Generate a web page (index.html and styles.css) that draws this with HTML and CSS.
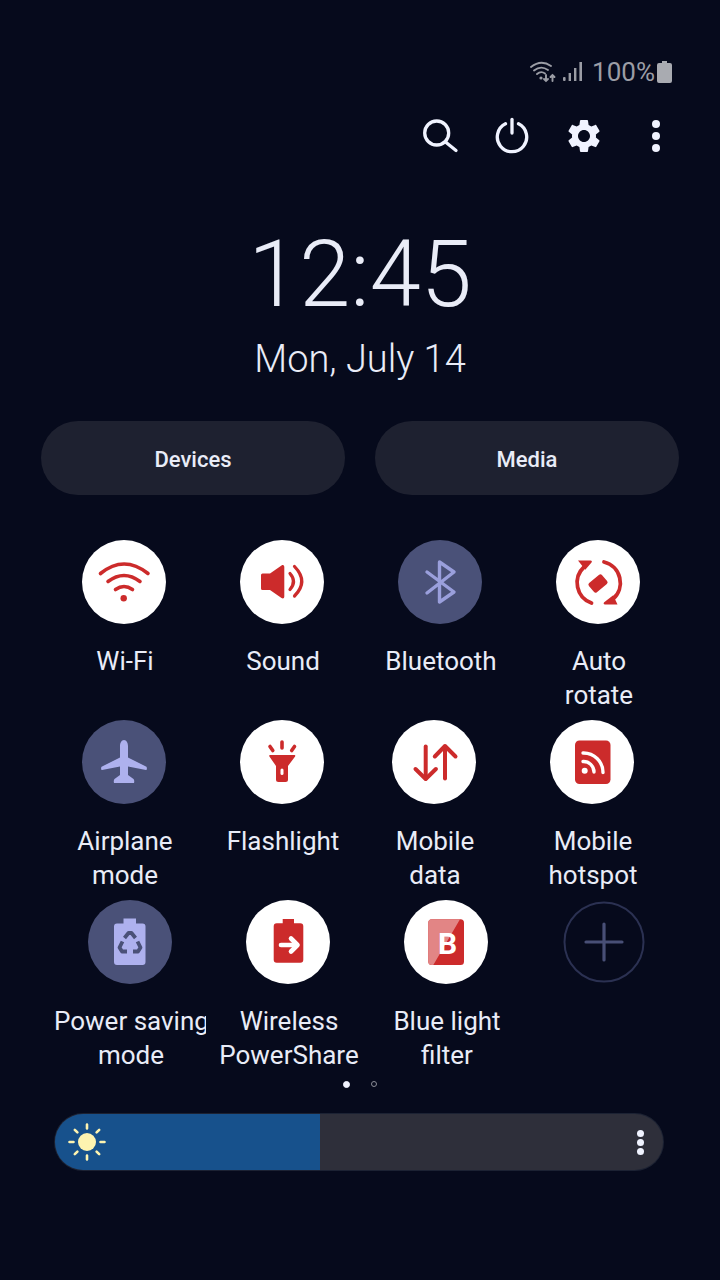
FILE: index.html
```html
<!DOCTYPE html>
<html lang="en">
  <head>
    <meta charset="UTF-8" />
    <title>Quick panel</title>
    <meta name="viewport" content="width=device-width, initial-scale=1.0" />
    <link rel="stylesheet" href="styles.css">
  </head>
  <body>
    <div class="status-bar">
      <svg width="26" height="22" viewBox="0 0 26 22" class="st-icon">
        <g fill="none" stroke="#9b9da5" stroke-width="1.9" stroke-linecap="round">
          <path d="M1 6 Q11 -2 21 5" />
          <path d="M4 9.5 Q11 4 18 9" />
          <path d="M7 13 Q11 9.5 15 12.5" />
          <path d="M16 14v6M14 18l2 2 2-2" />
          <path d="M22.5 20v-6M20.5 16l2-2 2 2" />
        </g>
        <circle cx="11" cy="17" r="1.6" fill="#9b9da5" />
      </svg>
      <svg width="20" height="20" viewBox="0 0 20 20" class="st-signal">
        <g fill="#9b9da5">
          <rect x="0" y="15" width="2.6" height="4" rx="1" />
          <rect x="5.6" y="11" width="2.4" height="8" />
          <rect x="11" y="6" width="2.4" height="13" />
          <rect x="16.4" y="0" width="2.6" height="19" />
        </g>
      </svg>
      <span class="st-text">100%</span>
      <svg width="15" height="22" viewBox="0 0 15 22">
        <path d="M5 0h5v2h3a2 2 0 0 1 2 2v16a2 2 0 0 1-2 2H2a2 2 0 0 1-2-2V4a2 2 0 0 1 2-2h3z" fill="#a9abb1" />
      </svg>
    </div>

    <div class="actions">
      <div class="action">
        <svg width="42" height="42" viewBox="0 0 42 42">
          <circle cx="17.700" cy="18" r="12" fill="none" stroke="#f0f3ff" stroke-width="3.300" />
          <path d="M26.500 27l10.500 8.500" stroke="#f0f3ff" stroke-width="3.300" stroke-linecap="round" />
        </svg>
      </div>
      <div class="action">
        <svg width="42" height="42" viewBox="0 0 42 42">
          <path d="M14.500 8.800A14.700 14.700 0 1 0 27.500 8.800" fill="none" stroke="#f0f3ff" stroke-width="3.300" stroke-linecap="round" />
          <path d="M21 4.500v13.500" stroke="#f0f3ff" stroke-width="3.300" stroke-linecap="round" />
        </svg>
      </div>
      <div class="action">
        <svg width="42" height="42" viewBox="-.6 -.6 25.2 25.2">
          <path fill="#f0f3ff" d="M19.14 12.94c.04-.3.06-.61.06-.94 0-.32-.02-.64-.07-.94l2.03-1.58c.18-.14.23-.41.12-.61l-1.92-3.32c-.12-.22-.37-.29-.59-.22l-2.39.96c-.5-.38-1.03-.7-1.62-.94l-.36-2.54c-.04-.24-.24-.41-.48-.41h-3.84c-.24 0-.43.17-.47.41l-.36 2.54c-.59.24-1.13.57-1.62.94l-2.39-.96c-.22-.08-.47 0-.59.22L2.74 8.87c-.12.21-.08.47.12.61l2.03 1.58c-.05.3-.09.63-.09.94s.02.64.07.94l-2.03 1.58c-.18.14-.23.41-.12.61l1.92 3.32c.12.22.37.29.59.22l2.39-.96c.5.38 1.03.7 1.62.94l.36 2.54c.05.24.24.41.48.41h3.84c.24 0 .44-.17.47-.41l.36-2.54c.59-.24 1.13-.56 1.62-.94l2.39.96c.22.08.47 0 .59-.22l1.92-3.32c.12-.22.07-.47-.12-.61l-2.01-1.58zM12 15.6c-1.98 0-3.6-1.62-3.6-3.6s1.62-3.6 3.6-3.6 3.6 1.62 3.6 3.6-1.62 3.6-3.6 3.6z" />
        </svg>
      </div>
      <div class="action">
        <svg width="42" height="42" viewBox="0 0 42 42" fill="#f0f3ff">
          <circle cx="21" cy="9" r="4" />
          <circle cx="21" cy="21" r="4" />
          <circle cx="21" cy="33" r="4" />
        </svg>
      </div>
    </div>

    <div class="clock">12:45</div>
    <div class="date">Mon, July 14</div>

    <div class="pills">
      <div class="pill">Devices</div>
      <div class="pill">Media</div>
    </div>

    <div class="tiles">
      <div class="tile-row">
        <div class="tile">
          <div class="circle on">
            <svg width="84" height="84" viewBox="0 0 84 84">
              <g fill="none" stroke="#cc2b2b" stroke-width="3.600" stroke-linecap="round">
                <path d="M18.500 33.500 Q42 14.500 66 33.500" />
                <path d="M26 41.500 Q42 29.500 58 41.500" />
                <path d="M33.500 49.500 Q42 43.500 50.500 49.500" />
              </g>
              <circle cx="41.700" cy="58.300" r="3.200" fill="#cc2b2b" />
            </svg>
          </div>
          <div class="label">Wi-Fi</div>
        </div>
        <div class="tile">
          <div class="circle on">
            <svg width="84" height="84" viewBox="0 0 84 84">
              <path d="M22.500 33.500h7.500l11.500-8c1.500-1 2.800-.3 2.800 1.500v29.500c0 1.800-1.300 2.500-2.800 1.500l-11.500-8h-7.500a1.500 1.500 0 0 1-1.500-1.500v-13.500a1.500 1.500 0 0 1 1.500-1.500z" fill="#cc2b2b" />
              <g fill="none" stroke="#cc2b2b" stroke-width="3.200" stroke-linecap="round">
                <path d="M50 33.500 Q57 41.500 50 49.500" />
                <path d="M54.500 26.500 Q69 41.500 54.500 56" />
              </g>
            </svg>
          </div>
          <div class="label">Sound</div>
        </div>
        <div class="tile">
          <div class="circle off">
            <svg width="84" height="84" viewBox="0 0 84 84">
              <path d="M29 32 L56 52 L41.500 62 V22 L56 32 L29 53" fill="none" stroke="#9a9fdc" stroke-width="3.400" stroke-linecap="round" stroke-linejoin="round" />
            </svg>
          </div>
          <div class="label">Bluetooth</div>
        </div>
        <div class="tile">
          <div class="circle on">
            <svg width="84" height="84" viewBox="0 0 84 84">
              <g fill="none" stroke="#cc2b2b" stroke-width="3.800" stroke-linecap="round">
                <path d="M28 27 A21.500 21.500 0 0 0 35.500 63" />
                <path d="M48 22 A21.500 21.500 0 0 1 57 59" />
              </g>
              <path d="M22 20.500h12.500c1.500 0 1.800 1.400.8 2.300l-6 7z" fill="#cc2b2b" />
              <path d="M61.500 64.500h-12.500c-1.500 0-1.800-1.400-.8-2.300l9-7z" fill="#cc2b2b" />
              <rect x="33.500" y="37.500" width="17" height="12" rx="2" transform="rotate(-40 42 43.500)" fill="#cc2b2b" />
            </svg>
          </div>
          <div class="label">Auto<br>rotate</div>
        </div>
      </div>

      <div class="tile-row">
        <div class="tile">
          <div class="circle off">
            <svg width="84" height="84" viewBox="0 0 84 84">
              <path d="M42 20c2.500 0 4 3 4 6V37.500L64 46.500c1.200.6 1.200 3.500 0 3.500L46 46.500V55L51.500 59c1 1 1 4 0 4H32.500c-1 0-1-3 0-4L38 55V46.500L20 50c-1.200 0-1.200-2.900 0-3.500L38 37.500V26c0-3 1.500-6 4-6z" fill="#aeb1ee" />
            </svg>
          </div>
          <div class="label">Airplane<br>mode</div>
        </div>
        <div class="tile">
          <div class="circle on">
            <svg width="84" height="84" viewBox="0 0 84 84">
              <path d="M30 35h24.500c.8 0 1 .8.6 1.400L48 46v13.500a2.500 2.500 0 0 1-2.500 2.500h-7a2.500 2.500 0 0 1-2.500-2.500V46l-6.600-9.600c-.4-.6-.2-1.400.6-1.400z" fill="#cc2b2b" />
              <rect x="40.500" y="48.500" width="3" height="6.500" rx="1.500" fill="#fff" />
              <g stroke="#cc2b2b" stroke-width="3.600" stroke-linecap="round">
                <path d="M42 22v6" />
                <path d="M30 26.500l2.800 4" />
                <path d="M54.500 26.500l-2.800 4" />
              </g>
            </svg>
          </div>
          <div class="label">Flashlight</div>
        </div>
        <div class="tile shift">
          <div class="circle on">
            <svg width="84" height="84" viewBox="0 0 84 84">
              <g fill="none" stroke="#cc2b2b" stroke-width="4" stroke-linecap="round" stroke-linejoin="round">
                <path d="M33.700 26.500V58.500" />
                <path d="M23.500 49l10.200 10 10.200-10" />
                <path d="M53 58.500V26.500" />
                <path d="M42.800 36.500L53 26l10.500 10.500" />
              </g>
            </svg>
          </div>
          <div class="label">Mobile<br>data</div>
        </div>
        <div class="tile">
          <div class="circle on">
            <svg width="84" height="84" viewBox="0 0 84 84">
              <rect x="25" y="20.500" width="35.500" height="43.500" rx="4.500" fill="#cc2b2b" />
              <circle cx="34.700" cy="50.700" r="3" fill="#fff" />
              <g fill="none" stroke="#fff" stroke-width="3.400" stroke-linecap="round">
                <path d="M33 41.500A10.500 10.500 0 0 1 44 52" />
                <path d="M33 33A19.500 19.500 0 0 1 53 52.500" />
              </g>
            </svg>
          </div>
          <div class="label">Mobile<br>hotspot</div>
        </div>
      </div>

      <div class="tile-row third">
        <div class="tile">
          <div class="circle off">
            <svg width="84" height="84" viewBox="0 0 84 84">
              <path d="M35.500 18.500h12.500v5h6.500a3 3 0 0 1 3 3V62a3 3 0 0 1-3 3H29a3 3 0 0 1-3-3V26.500a3 3 0 0 1 3-3h6.500z" fill="#aeb1ee" />
              <g fill="none" stroke="#4a5178" stroke-width="3.800" stroke-linejoin="round">
                <path d="M36.500 38l4-5h3l4 5" />
                <path d="M49.500 41.500l3 6-2.500 4h-5" />
                <path d="M39 51.500h-5l-2.500-4 3-6" />
              </g>
            </svg>
          </div>
          <div class="label clip">Power saving<br><span class="nudge">mode</span></div>
        </div>
        <div class="tile">
          <div class="circle on">
            <svg width="84" height="84" viewBox="0 0 84 84">
              <path d="M36.700 19h11.300v4.300h6.300a3 3 0 0 1 3 3V59.700a3 3 0 0 1-3 3H30.700a3 3 0 0 1-3-3V26.300a3 3 0 0 1 3-3h6z" fill="#cc2b2b" />
              <g fill="none" stroke="#fff" stroke-width="4.600" stroke-linecap="round" stroke-linejoin="round">
                <path d="M35 45h15.500" />
                <path d="M45 38.500l6.500 6.500-6.500 6.500" />
              </g>
            </svg>
          </div>
          <div class="label">Wireless<br>PowerShare</div>
        </div>
        <div class="tile">
          <div class="circle on">
            <svg width="84" height="84" viewBox="0 0 84 84">
              <rect x="24.300" y="19.300" width="35.700" height="45.700" rx="3.500" fill="#cc2b2b" />
              <path d="M27.800 19.300H56L29.300 65h-1.500a3.500 3.500 0 0 1-3.500-3.500V22.800a3.500 3.500 0 0 1 3.500-3.500z" fill="#e28585" />
              <text x="43.500" y="53.500" text-anchor="middle" class="b-mark">B</text>
            </svg>
          </div>
          <div class="label">Blue light<br>filter</div>
        </div>
        <div class="tile">
          <div class="circle add">
            <svg width="84" height="84" viewBox="0 0 84 84">
              <circle cx="42" cy="42" r="39.500" fill="none" stroke="#2b3152" stroke-width="2" />
              <path d="M42 24v36M24 42h36" stroke="#484f76" stroke-width="3.200" stroke-linecap="round" />
            </svg>
          </div>
        </div>
      </div>
    </div>

    <div class="pager">
      <span class="dot active"></span>
      <span class="dot"></span>
    </div>

    <div class="brightness">
      <div class="fill">
        <svg width="40" height="40" viewBox="0 0 40 40">
          <circle cx="20" cy="20" r="9" fill="#fdf3b0" />
          <g stroke="#fdf3b0" stroke-width="2.600" stroke-linecap="round">
            <path d="M20 2.500v4M20 33.500v4M2.500 20h4M33.500 20h4" />
            <path d="M7.800 7.800l2.600 2.600M29.600 29.600l2.600 2.600M7.800 32.200l2.600-2.600M29.600 10.400l2.600-2.600" />
          </g>
        </svg>
      </div>
      <div class="more">
        <span></span>
        <span></span>
        <span></span>
      </div>
    </div>
  </body>
</html>
```

FILE: styles.css
```css
body {
  margin: 0;
  width: 720px;
  height: 1280px;
  overflow: hidden;
  background: #060a1c;
  font-family: Roboto, "Noto Sans", sans-serif;
  color: #e9ecf7;
}

.status-bar {
  display: flex;
  align-items: center;
  justify-content: flex-end;
  height: 28px;
  padding: 58px 48px 0 0;
}

.st-icon {
  margin-right: 7px;
}

.st-signal {
  margin-right: 9px;
}

.st-text {
  font-size: 26px;
  color: #9b9da5;
  margin-right: 2px;
}

.actions {
  display: flex;
  justify-content: flex-end;
  gap: 30px;
  padding-right: 43px;
  margin-top: 29px;
}

.action {
  width: 42px;
  height: 42px;
}

.clock {
  margin-top: 73px;
  height: 90px;
  line-height: 90px;
  font-size: 92px;
  font-weight: 300;
  text-align: center;
}

.date {
  margin-top: 17px;
  height: 44px;
  line-height: 44px;
  font-size: 38px;
  font-weight: 300;
  text-align: center;
}

.pills {
  display: flex;
  gap: 30px;
  padding-left: 41px;
  margin-top: 40px;
}

.pill {
  width: 304px;
  height: 74px;
  box-sizing: border-box;
  padding-top: 2px;
  line-height: 74px;
  border-radius: 37px;
  background: #1e2130;
  text-align: center;
  font-size: 22px;
  font-weight: 500;
  color: #e9ecf7;
}

.tiles {
  margin-top: 45px;
}

.tile-row {
  display: flex;
  height: 180px;
  padding-left: 45px;
}

.tile-row.third {
  padding-left: 51px;
}

.tile {
  width: 158px;
  display: flex;
  flex-direction: column;
  align-items: center;
}

.tile.shift {
  margin-left: -6px;
}

.circle {
  width: 84px;
  height: 84px;
  border-radius: 50%;
  flex: none;
}

.circle svg {
  display: block;
}

.circle.on {
  background: #fff;
}

.circle.off {
  background: #4a5178;
}

.label {
  margin-top: 20px;
  width: 158px;
  box-sizing: border-box;
  padding-left: 2px;
  font-size: 26px;
  line-height: 34px;
  text-align: center;
  color: #e9ecf7;
  white-space: nowrap;
}

/* the reference cuts this label off at the tile edge */
.label.clip {
  width: 152px;
  padding-left: 0;
  overflow: hidden;
}

.nudge {
  padding-left: 2px;
}

.b-mark {
  font-family: Roboto, sans-serif;
  font-size: 30px;
  font-weight: 700;
  fill: #fff;
}

.pager {
  display: flex;
  justify-content: center;
  gap: 19px;
  align-items: center;
  height: 8px;
}

.dot {
  width: 6px;
  height: 6px;
  border: 1px solid #8a8c96;
  border-radius: 50%;
  box-sizing: border-box;
  margin: 0 1px;
}

.dot.active {
  width: 7px;
  height: 7px;
  background: #f0f3ff;
  border-color: #f0f3ff;
}

.brightness {
  display: flex;
  margin: 26px 0 0 55px;
  width: 608px;
  height: 56px;
  border-radius: 28px;
  overflow: hidden;
  background: #2e2f3a;
  box-shadow: 0 0 0 1px #1c2233;
}

.fill {
  width: 265px;
  height: 56px;
  background: #17518c;
  display: flex;
  align-items: center;
  padding-left: 12px;
  box-sizing: border-box;
}

.more {
  margin-left: auto;
  margin-right: 19px;
  display: flex;
  flex-direction: column;
  justify-content: center;
  gap: 2px;
}

.more span {
  width: 7px;
  height: 7px;
  background: #f0f3ff;
  border-radius: 50%;
}
```
